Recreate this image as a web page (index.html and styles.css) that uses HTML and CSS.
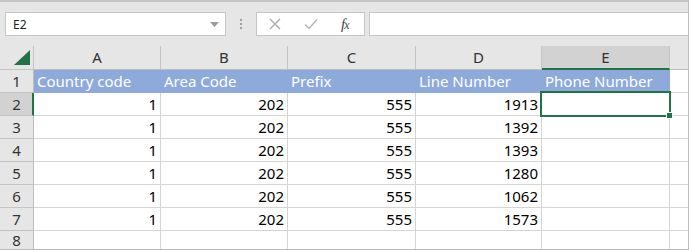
FILE: index.html
```html
<!DOCTYPE html>
<html>
<head>
<meta charset="utf-8">
<link rel="stylesheet" href="styles.css">
</head>
<body>
<div class="toolbar">
  <div class="namebox">
    <span class="name">E2</span>
    <svg class="caret" width="9" height="5" viewBox="0 0 9 5"><path d="M0 0h9L4.5 5z" fill="#9a9a9a"/></svg>
  </div>
  <div class="grip"><span></span><span></span><span></span></div>
  <div class="fbuttons">
    <svg class="btn" width="12" height="12" viewBox="0 0 12 12"><path d="M1 1l10 10M11 1L1 11" stroke="#a8a8a8" stroke-width="1.3" fill="none"/></svg>
    <svg class="btn" width="14" height="12" viewBox="0 0 14 12"><path d="M1 6.5l4 4L13 1.5" stroke="#b4b4b4" stroke-width="1.4" fill="none"/></svg>
    <span class="fx"><i>f</i><i class="x">x</i></span>
  </div>
  <div class="formula"></div>
</div>
<div class="sheet">
  <div class="corner"><svg width="16" height="15" viewBox="0 0 16 15"><path d="M16 0V15H0z" fill="#217346"/></svg></div>
  <div class="ch">A</div><div class="ch">B</div><div class="ch">C</div><div class="ch">D</div><div class="ch sel">E</div><div class="ch last"></div>

  <div class="rh">1</div>
  <div class="c hd">Country code</div><div class="c hd">Area Code</div><div class="c hd">Prefix</div><div class="c hd">Line Number</div><div class="c hd">Phone Number</div><div class="c last"></div>

  <div class="rh sel">2</div>
  <div class="c n">1</div><div class="c n">202</div><div class="c n">555</div><div class="c n">1913</div><div class="c active"></div><div class="c last"></div>

  <div class="rh">3</div>
  <div class="c n">1</div><div class="c n">202</div><div class="c n">555</div><div class="c n">1392</div><div class="c"></div><div class="c last"></div>

  <div class="rh">4</div>
  <div class="c n">1</div><div class="c n">202</div><div class="c n">555</div><div class="c n">1393</div><div class="c"></div><div class="c last"></div>

  <div class="rh">5</div>
  <div class="c n">1</div><div class="c n">202</div><div class="c n">555</div><div class="c n">1280</div><div class="c"></div><div class="c last"></div>

  <div class="rh">6</div>
  <div class="c n">1</div><div class="c n">202</div><div class="c n">555</div><div class="c n">1062</div><div class="c"></div><div class="c last"></div>

  <div class="rh">7</div>
  <div class="c n">1</div><div class="c n">202</div><div class="c n">555</div><div class="c n">1573</div><div class="c"></div><div class="c last"></div>

  <div class="rh lastrow">8</div>
  <div class="c lastrow"></div><div class="c lastrow"></div><div class="c lastrow"></div><div class="c lastrow"></div><div class="c lastrow"></div><div class="c last lastrow"></div>
</div>
</body>
</html>
```

FILE: styles.css
```css
html, body {
  margin: 0;
  padding: 0;
  background: #ffffff;
  overflow: hidden;
  width: 689px;
  height: 250px;
}
body {
  font-family: "Noto Sans", "Open Sans", sans-serif;
  color: #000;
  border-right: 1px solid #bdbdbd;
  border-bottom: 1px solid #bdbdbd;
  box-sizing: border-box;
}
.toolbar {
  height: 46px;
  box-sizing: border-box;
  background: #e6e6e6;
  border-top: 2px solid #c4c4c4;
  display: flex;
  align-items: flex-start;
  padding: 10px 0 0 5px;
}
.namebox {
  width: 221px;
  height: 24px;
  box-sizing: border-box;
  background: #fff;
  border: 1px solid #c6c6c6;
  display: flex;
  align-items: center;
  justify-content: space-between;
  padding: 0 6px 0 7px;
}
.name {
  font-family: "Noto Sans", sans-serif;
  font-size: 12px;
  color: #222;
}
.caret { margin-top: 1px; }
.grip {
  width: 30px;
  height: 24px;
  display: flex;
  flex-direction: column;
  align-items: center;
  justify-content: center;
  gap: 2px;
}
.grip span {
  width: 2px;
  height: 2px;
  background: #a0a0a0;
}
.fbuttons {
  width: 109px;
  height: 24px;
  box-sizing: border-box;
  background: #fff;
  border: 1px solid #c6c6c6;
  display: flex;
  align-items: center;
  padding-left: 12px;
  gap: 23px;
}
.fx {
  font-family: "Liberation Serif", serif;
  font-size: 15px;
  color: #444;
  letter-spacing: -1px;
}
.fx .x { font-size: 12px; }
.formula {
  flex: 1;
  height: 24px;
  margin-left: 4px;
  box-sizing: border-box;
  background: #fff;
  border: 1px solid #c6c6c6;
  border-right: none;
}
.sheet {
  display: grid;
  grid-template-columns: 34px 127px 127px 128px 126px 128px 1fr;
  grid-template-rows: 24px repeat(7, 23px) 18px;
}
.sheet > div {
  box-sizing: border-box;
  border-right: 1px solid #d4d4d4;
  border-bottom: 1px solid #d4d4d4;
}
.sheet > .lastrow {
  border-bottom: none;
  line-height: 18px;
}
.corner {
  background: #e6e6e6;
  display: flex;
  align-items: flex-end;
  justify-content: flex-end;
  padding: 0 3px 4px 0;
  border-right-color: #c4c4c4 !important;
  border-bottom-color: #c4c4c4 !important;
}
.ch {
  background: #e6e6e6;
  text-align: center;
  font-size: 15px;
  line-height: 23px;
  color: #333;
  border-right-color: #c4c4c4 !important;
  border-bottom-color: #bdbdbd !important;
}
.ch.sel {
  background: #d2d2d2;
  border-bottom: 2px solid #217346 !important;
  line-height: 22px;
}
.rh {
  background: #e6e6e6;
  text-align: center;
  font-size: 15px;
  line-height: 22px;
  color: #333;
  border-right-color: #bdbdbd !important;
  border-bottom-color: #c4c4c4 !important;
}
.rh.sel {
  background: #d2d2d2;
  border-right: 2px solid #217346 !important;
  padding-left: 1px;
}
.c {
  font-size: 15px;
  line-height: 22px;
  padding: 0 3px;
  white-space: nowrap;
  overflow: visible;
}
.c.hd {
  background: #8eaadb;
  color: #fff;
  border-right-color: #8eaadb;
  border-bottom-color: #8eaadb;
}
.c.n { text-align: right; }
.c.active {
  position: relative;
  outline: 2px solid #217346;
  outline-offset: -1px;
  margin: -1px 0 0 -1px;
  width: calc(100% + 1px);
  height: calc(100% + 1px);
}
.c.active::after {
  content: "";
  position: absolute;
  right: -4px;
  bottom: -4px;
  width: 5px;
  height: 5px;
  background: #217346;
  border: 1px solid #fff;
}
.last { border-right: none !important; }
.ch.last { background: #e6e6e6; }
```
